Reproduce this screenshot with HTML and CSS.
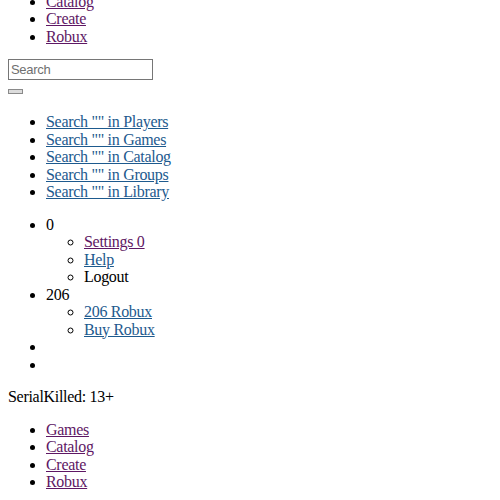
FILE: index.html
```html
<!DOCTYPE html>
<html>
<head>
<meta charset="utf-8">
<link rel="stylesheet" href="styles.css">
</head>
<body>
<ul class="nav nav-top">
  <li><a class="visited" href="#">Games</a></li>
  <li><a class="visited" href="#">Catalog</a></li>
  <li><a class="visited" href="#">Create</a></li>
  <li><a class="visited" href="#">Robux</a></li>
</ul>
<div class="search-box">
  <input class="search-input" type="text" placeholder="Search">
</div>
<div class="search-btn-row">
  <button class="search-btn" type="button"></button>
</div>
<ul class="nav">
  <li><a class="link" href="#">Search "" in Players</a></li>
  <li><a class="link" href="#">Search "" in Games</a></li>
  <li><a class="link" href="#">Search "" in Catalog</a></li>
  <li><a class="link" href="#">Search "" in Groups</a></li>
  <li><a class="link" href="#">Search "" in Library</a></li>
</ul>
<ul class="nav">
  <li>0
    <ul class="sub">
      <li><a class="visited" href="#">Settings 0</a></li>
      <li><a class="link" href="#">Help</a></li>
      <li>Logout</li>
    </ul>
  </li>
  <li>206
    <ul class="sub">
      <li><a class="link" href="#">206 Robux</a></li>
      <li><a class="link" href="#">Buy Robux</a></li>
    </ul>
  </li>
  <li></li>
  <li></li>
</ul>
<div class="user">SerialKilled: 13+</div>
<ul class="nav">
  <li><a class="visited" href="#">Games</a></li>
  <li><a class="visited" href="#">Catalog</a></li>
  <li><a class="visited" href="#">Create</a></li>
  <li><a class="visited" href="#">Robux</a></li>
</ul>
</body>
</html>
```

FILE: styles.css
```css
html, body {
  background: #ffffff;
}
body {
  margin: 0 8px 8px 8px;
  font-family: "Liberation Serif", "Times New Roman", serif;
  font-size: 16px;
  line-height: 17.5px;
  letter-spacing: -0.3px;
  color: #000000;
}
.nav {
  margin: 15px 0;
  padding-left: 38px;
  list-style: disc;
}
.nav-top {
  margin-top: -25px;
  margin-bottom: 0;
}
.sub {
  margin: 0;
  padding-left: 38px;
  list-style: circle;
}
.link {
  color: #1d5a8e;
}
.visited {
  color: #5e1764;
}
.search-box {
  margin-top: 13.5px;
  line-height: 0;
}
.search-input {
  box-sizing: border-box;
  width: 145px;
  height: 21px;
  margin: 0;
  padding: 0 2px;
  border: 1px solid #767676;
  font-family: "Liberation Sans", Arial, sans-serif;
  font-size: 13px;
  letter-spacing: -0.3px;
  color: #000;
  background: #fff;
}
.search-input::placeholder {
  color: #6f6f6f;
}
.search-btn-row {
  margin-top: 8px;
  margin-bottom: 19.5px;
  line-height: 0;
}
.search-btn {
  box-sizing: border-box;
  width: 15px;
  height: 5px;
  margin: 0;
  padding: 0;
  border: 1px solid #8a8a8a;
  background: #dcdcdc;
}
```
